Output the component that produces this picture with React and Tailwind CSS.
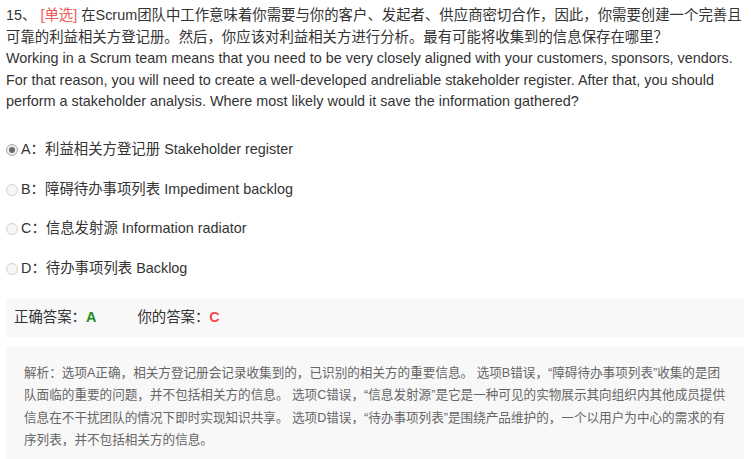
import React from 'react';

const options = [
  { key: 'A', text: '利益相关方登记册 Stakeholder register', checked: true },
  { key: 'B', text: '障碍待办事项列表 Impediment backlog' },
  { key: 'C', text: '信息发射源 Information radiator' },
  { key: 'D', text: '待办事项列表 Backlog' },
];

const analysisLines = [
  '解析：选项A正确，相关方登记册会记录收集到的，已识别的相关方的重要信息。 选项B错误，“障碍待办事项列表”收集的是团',
  '队面临的重要的问题，并不包括相关方的信息。 选项C错误，“信息发射源”是它是一种可见的实物展示其向组织内其他成员提供',
  '信息在不干扰团队的情况下即时实现知识共享。 选项D错误，“待办事项列表”是围绕产品维护的，一个以用户为中心的需求的有',
  '序列表，并不包括相关方的信息。',
];

function Radio({ checked }) {
  return (
    <span
      className={
        checked
          ? 'w-[12px] h-[12px] rounded-full border border-[#a8a8a8] bg-[#eeeeee] flex items-center justify-center shrink-0'
          : 'w-[12px] h-[12px] rounded-full border border-[#d2d2d2] bg-[#f7f7f7] flex items-center justify-center shrink-0'
      }
    >
      {checked && <span className="w-[6px] h-[6px] rounded-full bg-[#6b6b6b]" />}
    </span>
  );
}

export default function App() {
  return (
    <div
      className="w-[751px] h-[459px] overflow-hidden bg-white text-[#333] px-[6px] pt-[5px]"
      style={{ fontFamily: '"Liberation Sans", Arial, "Noto Sans CJK SC", sans-serif' }}
    >
      <div className="text-[14.4px] leading-[21.6px] whitespace-nowrap">
        <div>
          15、 <span className="text-[#ee5a5a]">[单选]</span> 在Scrum团队中工作意味着你需要与你的客户、发起者、供应商密切合作，因此，你需要创建一个完善且
        </div>
        <div>可靠的利益相关方登记册。然后，你应该对利益相关方进行分析。最有可能将收集到的信息保存在哪里？</div>
        <div>Working in a Scrum team means that you need to be very closely aligned with your customers, sponsors, vendors.</div>
        <div>For that reason, you will need to create a well-developed andreliable stakeholder register. After that, you should</div>
        <div>perform a stakeholder analysis. Where most likely would it save the information gathered?</div>
      </div>

      <div className="mt-[17px]">
        {options.map((o) => (
          <div key={o.key} className="h-[39.7px] flex items-center gap-[3px] text-[14.4px]">
            <Radio checked={o.checked} />
            <span>{o.key}：{o.text}</span>
          </div>
        ))}
      </div>

      <div className="mt-[10px] w-[738px] h-[38px] bg-[#f8f8f8] flex items-center px-[8px] text-[14.4px]">
        <span>正确答案：</span>
        <span className="font-bold text-[#1f8a1f]">A</span>
        <span className="ml-[41px]">你的答案：</span>
        <span className="font-bold text-[#f04a4a]">C</span>
      </div>

      <div className="mt-[10px] w-[738px] bg-[#f8f8f8] pl-[18px] pt-[15px] pb-[14px] text-[12.6px] leading-[22.5px] text-[#666] whitespace-nowrap">
        {analysisLines.map((l, i) => (
          <div key={i}>{l}</div>
        ))}
      </div>
    </div>
  );
}
